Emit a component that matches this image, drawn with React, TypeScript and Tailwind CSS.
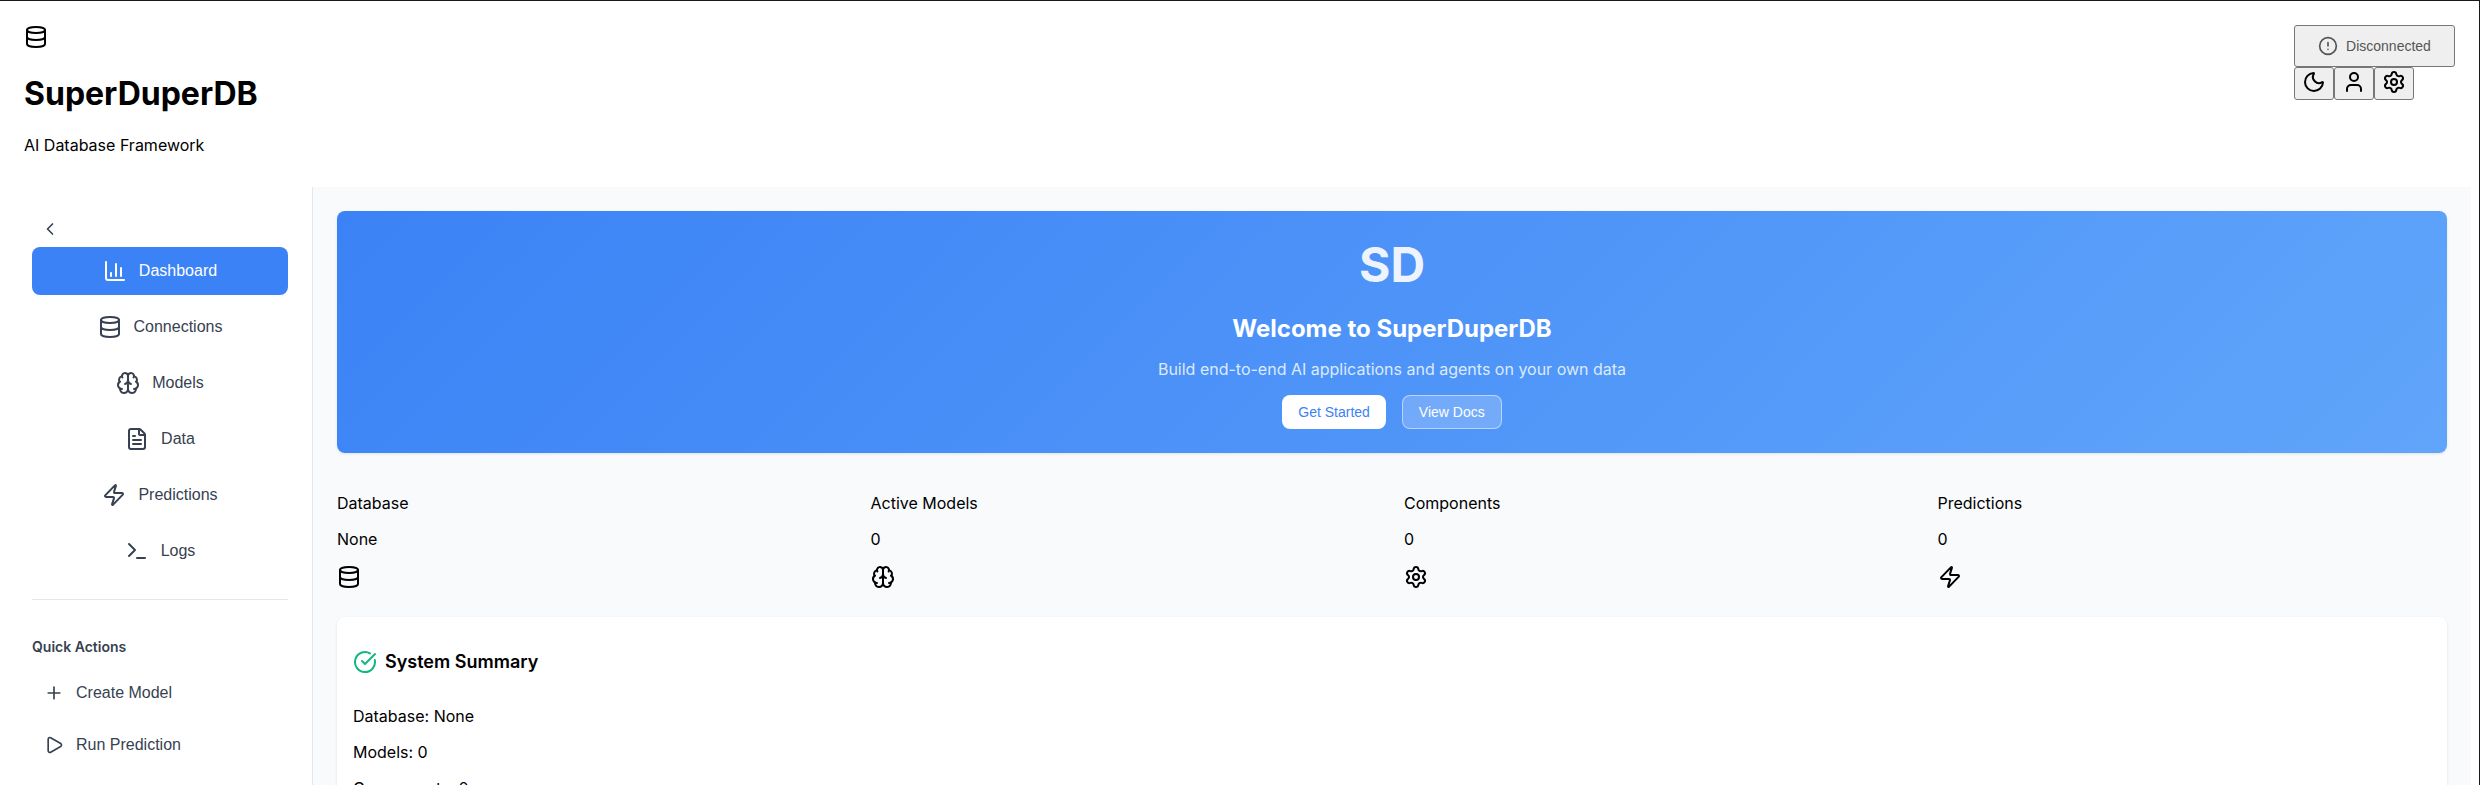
import {
  Brain, ChevronLeft, CircleAlert, CircleCheckBig, Database, FileText,
  Moon, Play, Plus, Settings, Terminal, User, Zap, type LucideIcon,
} from 'lucide-react';

function BarChart() {
  return (
    <svg width="24" height="24" viewBox="0 0 24 24" fill="none" stroke="currentColor" strokeWidth="2" strokeLinecap="round" strokeLinejoin="round">
      <path d="M3 3v16a2 2 0 0 0 2 2h16" />
      <path d="M18 17V9" />
      <path d="M13 17V5" />
      <path d="M8 17v-3" />
    </svg>
  );
}

const navItems: { label: string; icon: LucideIcon | typeof BarChart; active?: boolean }[] = [
  { label: 'Dashboard', icon: BarChart, active: true },
  { label: 'Connections', icon: Database },
  { label: 'Models', icon: Brain },
  { label: 'Data', icon: FileText },
  { label: 'Predictions', icon: Zap },
  { label: 'Logs', icon: Terminal },
];

const stats: { label: string; value: string; icon: LucideIcon }[] = [
  { label: 'Database', value: 'None', icon: Database },
  { label: 'Active Models', value: '0', icon: Brain },
  { label: 'Components', value: '0', icon: Settings },
  { label: 'Predictions', value: '0', icon: Zap },
];

const quickActions: { label: string; icon: LucideIcon }[] = [
  { label: 'Create Model', icon: Plus },
  { label: 'Run Prediction', icon: Play },
];

function Header() {
  return (
    <header className="flex h-[186px] shrink-0 items-start justify-between px-6 pt-6">
      <div>
        <Database size={24} />
        <h1 className="mt-[25px] text-[32px] leading-[39px] font-bold">SuperDuperDB</h1>
        <p className="mt-[22px] text-base leading-5">AI Database Framework</p>
      </div>
      <div className="w-[161px]">
        <button className="flex h-[42px] w-full items-center justify-center gap-2 rounded-[3px] border border-[#767676] bg-[#efefef] font-['Liberation_Sans',sans-serif] text-sm text-[#555555]">
          <CircleAlert size={20} />
          Disconnected
        </button>
        <div className="flex">
          {[Moon, User, Settings].map((Icon, i) => (
            <button key={i} className="flex h-[33px] w-10 justify-center rounded-[3px] border border-[#767676] bg-[#efefef] pt-[2px]">
              <Icon size={24} />
            </button>
          ))}
        </div>
      </div>
    </header>
  );
}

function Sidebar() {
  return (
    <aside className="w-[313px] shrink-0 border-r border-[#e5e7eb] pt-8 pr-6 pl-8 text-[#374151]">
      <button className="flex h-5 pl-2">
        <ChevronLeft size={20} />
      </button>
      <nav className="mt-2 flex flex-col gap-2 font-['Liberation_Sans',sans-serif]">
        {navItems.map(({ label, icon: Icon, active }) => (
          <button
            key={label}
            className={
              active
                ? 'flex h-12 items-center justify-center gap-3 rounded-lg bg-[#3b82f6] text-base text-white'
                : 'flex h-12 items-center justify-center gap-3 rounded-lg text-base'
            }
          >
            <Icon size={24} />
            {label}
          </button>
        ))}
      </nav>
      <div className="mt-6 border-t border-[#e5e7eb] pt-[38px]">
        <h4 className="text-sm leading-[18px] font-semibold">Quick Actions</h4>
        <div className="mt-[15px] flex flex-col gap-2 font-['Liberation_Sans',sans-serif]">
          {quickActions.map(({ label, icon: Icon }) => (
            <button key={label} className="flex h-11 items-center gap-3 px-3 text-base">
              <Icon size={20} />
              {label}
            </button>
          ))}
        </div>
      </div>
    </aside>
  );
}

function Banner() {
  return (
    <section className="flex h-[242px] flex-col items-center rounded-lg bg-[linear-gradient(135deg,#3b82f6,#60a5fa)] pt-[25px] text-white shadow-[0_1px_3px_rgba(0,0,0,0.1)]">
      <div className="text-5xl leading-[58px] font-bold opacity-90">SD</div>
      <h2 className="mt-5 text-2xl leading-[30px] font-bold">Welcome to SuperDuperDB</h2>
      <p className="mt-[15px] text-base leading-5 text-[#dbeafe]">Build end-to-end AI applications and agents on your own data</p>
      <div className="mt-4 flex gap-4 font-['Liberation_Sans',sans-serif] text-sm">
        <button className="h-[34px] rounded-lg bg-white px-4 text-[#3b82f6]">Get Started</button>
        <button className="h-[34px] rounded-lg border border-white/50 bg-white/20 px-4">View Docs</button>
      </div>
    </section>
  );
}

export default function App() {
  return (
    <div className="flex h-[785px] flex-col overflow-hidden border-t border-r border-[#18181b] bg-white font-[Inter,sans-serif] text-black">
      <Header />
      <div className="flex min-h-0 flex-1 pr-2">
        <Sidebar />
        <main className="min-w-0 flex-1 overflow-hidden bg-[#f9fafc] p-6">
          <Banner />
          <section className="mt-10 grid grid-cols-4 gap-6">
            {stats.map(({ label, value, icon: Icon }) => (
              <div key={label}>
                <p className="leading-5">{label}</p>
                <p className="mt-4 leading-5">{value}</p>
                <Icon size={24} className="mt-4" />
              </div>
            ))}
          </section>
          <section className="mt-7 h-80 rounded-lg bg-white px-4 pt-8 shadow-[0_1px_3px_rgba(0,0,0,0.1)]">
            <h3 className="flex items-center gap-2 text-lg leading-6 font-semibold">
              <CircleCheckBig size={24} className="text-[#10b981]" />
              <span className="pt-px">System Summary</span>
            </h3>
            <div className="mt-8 flex flex-col gap-4 leading-5">
              <p>Database: None</p>
              <p>Models: 0</p>
              <p>Components: 0</p>
            </div>
          </section>
        </main>
      </div>
    </div>
  );
}
